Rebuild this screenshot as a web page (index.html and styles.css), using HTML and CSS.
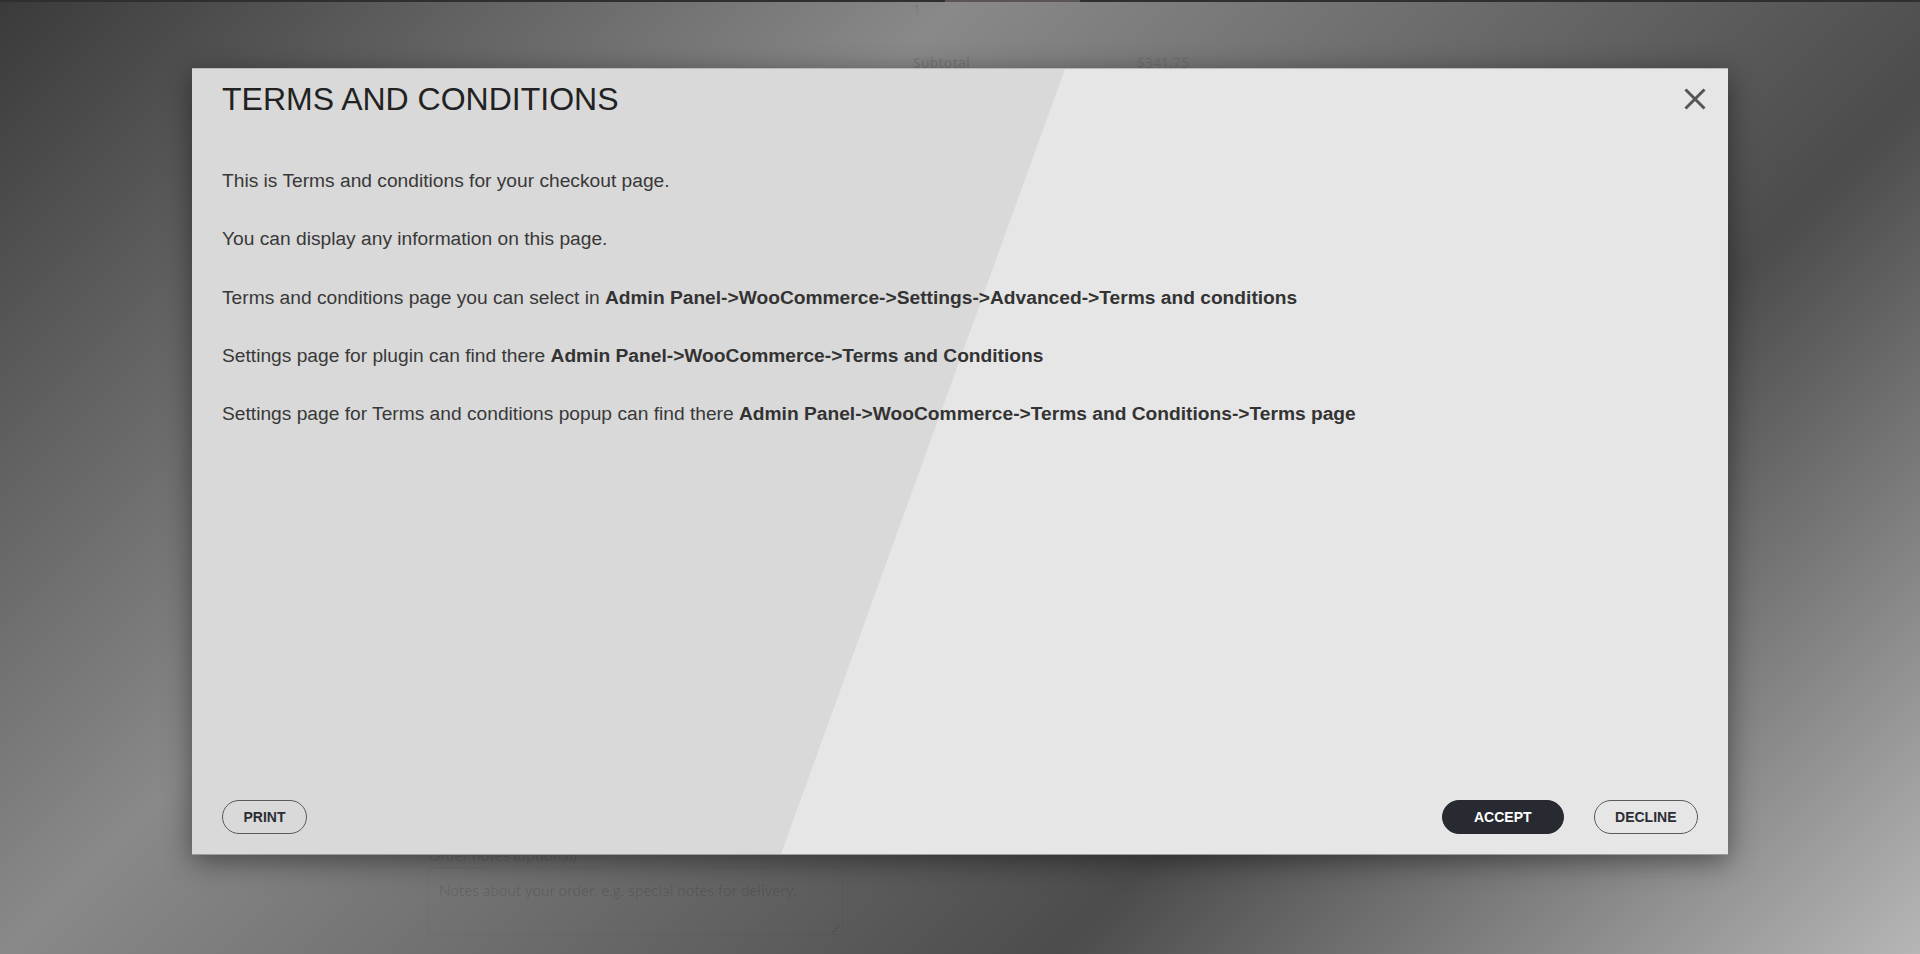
FILE: index.html
```html
<!DOCTYPE html>
<html lang="en">
<head>
<meta charset="utf-8">
<title>Terms and Conditions</title>
<link rel="stylesheet" href="styles.css">
</head>
<body>
<div class="topbar"><span class="topbar-seg"></span></div>
<main class="page">
  <section class="order-summary">
    <div class="qty">1</div>
    <div class="summary-row"><span class="summary-label">Subtotal</span><span class="summary-value">$341.75</span></div>
  </section>
  <section class="notes">
    <div class="notes-label">Order notes (optional)</div>
    <div class="notes-area">Notes about your order, e.g. special notes for delivery.<span class="resize"></span></div>
  </section>
</main>

<div class="overlay">
  <div class="modal">
    <header class="modal-head">
      <h2 class="modal-title">TERMS AND CONDITIONS</h2>
      <button class="close" aria-label="Close">
        <svg width="22" height="22" viewBox="0 0 22 22"><path d="M1.5 1.5 L20.5 20.5 M20.5 1.5 L1.5 20.5" stroke="#555" stroke-width="3" fill="none"/></svg>
      </button>
    </header>
    <div class="modal-body">
      <p>This is Terms and conditions for your checkout page.</p>
      <p>You can display any information on this page.</p>
      <p>Terms and conditions page you can select in <b>Admin Panel-&gt;WooCommerce-&gt;Settings-&gt;Advanced-&gt;Terms and conditions</b></p>
      <p>Settings page for plugin can find there <b>Admin Panel-&gt;WooCommerce-&gt;Terms and Conditions</b></p>
      <p>Settings page for Terms and conditions popup can find there <b>Admin Panel-&gt;WooCommerce-&gt;Terms and Conditions-&gt;Terms page</b></p>
    </div>
    <footer class="modal-foot">
      <button class="btn">PRINT</button>
      <div class="actions">
        <button class="btn btn-accept">ACCEPT</button>
        <button class="btn">DECLINE</button>
      </div>
    </footer>
  </div>
</div>
</body>
</html>
```

FILE: styles.css
```css
html, body {
  margin: 0;
  padding: 0;
}
body {
  width: 1920px;
  height: 954px;
  overflow: hidden;
  position: relative;
  font-family: "Open Sans", "Liberation Sans", sans-serif;
  background: linear-gradient(135deg, #3a3a3a 0%, #626262 16.6%, #898989 33.4%, #6a6a6a 52%, #4c4c4c 70%, #b6b6b6 100%);
}

.topbar {
  height: 2px;
  background: #2f2f2f;
}
.topbar-seg {
  display: block;
  margin-left: 945px;
  width: 135px;
  height: 2px;
  background: #5a5454;
}

.page {
  color: rgba(0, 0, 0, 0.13);
}
.order-summary {
  margin-left: 913px;
}
.qty {
  line-height: 14px;
  font-size: 13px;
}
.summary-row {
  margin-top: 37px;
  line-height: 20px;
  font-size: 14px;
  display: flex;
}
.summary-label {
  width: 224px;
  font-weight: 600;
}
.notes {
  margin-left: 428px;
  margin-top: 772px;
  font-family: Lato, "Open Sans", sans-serif;
}
.notes-label {
  line-height: 20px;
  font-size: 15.5px;
}
.notes-area {
  position: relative;
  margin-top: 2px;
  width: 415px;
  height: 68px;
  box-sizing: border-box;
  padding: 12px 10px;
  line-height: 20px;
  font-size: 15.2px;
  white-space: nowrap;
  border: 1px solid rgba(0, 0, 0, 0.035);
}
.resize {
  position: absolute;
  right: 2px;
  bottom: 2px;
  width: 7px;
  height: 7px;
  background: linear-gradient(135deg, transparent 45%, rgba(0,0,0,.2) 46%, rgba(0,0,0,.2) 54%, transparent 55%);
}

.overlay {
  position: absolute;
  inset: 0;
  display: flex;
  padding: 68px 192px 99px;
  box-sizing: border-box;
}
.modal {
  position: relative;
  flex: 1;
  display: flex;
  flex-direction: column;
  box-sizing: border-box;
  padding: 11px 30px 20px;
  background: #e6e6e6;
  border-top: 1px solid #b8b8b8;
  border-bottom: 1px solid #9c9c9c;
  box-shadow: 0 6px 26px rgba(0, 0, 0, 0.45);
  font-family: "Liberation Sans", Arial, sans-serif;
}
.modal::before {
  content: "";
  position: absolute;
  inset: 0;
  background: #d9d9d9;
  clip-path: polygon(0 0, 873px 0, 589px 100%, 0 100%);
}
.modal > * {
  position: relative;
}

.modal-head {
  display: flex;
  align-items: center;
  justify-content: space-between;
}
.modal-title {
  margin: 0;
  font-size: 32px;
  line-height: 38px;
  font-weight: 400;
  color: #222;
}
.close {
  width: 22px;
  height: 22px;
  padding: 0;
  margin-right: -8px;
  border: 0;
  background: none;
  display: block;
}
.close svg {
  display: block;
}

.modal-body {
  margin-top: 49px;
  display: flex;
  flex-direction: column;
  gap: 30.3px;
  color: #383838;
  font-size: 19.2px;
  line-height: 28px;
}
.modal-body p {
  margin: 0;
}
.modal-body b {
  font-weight: 700;
  color: #333;
}

.modal-foot {
  margin-top: auto;
  display: flex;
  justify-content: space-between;
  align-items: center;
}
.actions {
  display: flex;
  gap: 30px;
}
.btn {
  height: 34px;
  box-sizing: border-box;
  padding: 0 20.5px;
  border: 1px solid #5a5a5a;
  border-radius: 17px;
  background: transparent;
  font-family: "Liberation Sans", Arial, sans-serif;
  font-size: 14px;
  font-weight: 700;
  line-height: 32px;
  color: #2a2d33;
}
.btn-accept {
  padding: 0 31px;
  background: #272b31;
  border-color: #272b31;
  color: #fff;
}
```
